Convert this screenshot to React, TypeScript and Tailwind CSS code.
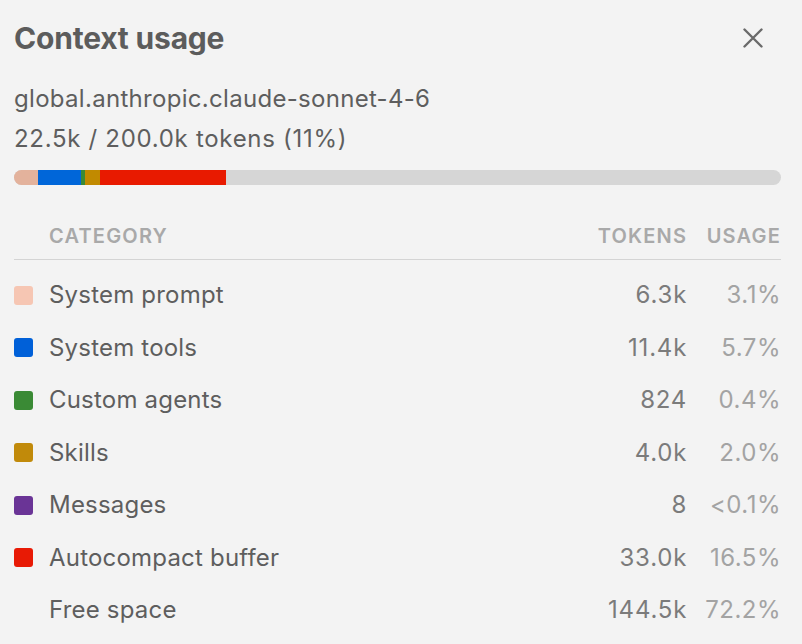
const rows = [
  { name: "System prompt", tokens: "6.3k", usage: "3.1%", pct: 3.1, swatch: "bg-[#f6c6b3]", bar: "bg-[#e3b29c]" },
  { name: "System tools", tokens: "11.4k", usage: "5.7%", pct: 5.7, swatch: "bg-[#0060d8]", bar: "bg-[#0066d9]" },
  { name: "Custom agents", tokens: "824", usage: "0.4%", pct: 0.4, swatch: "bg-[#3a8a35]", bar: "bg-[#3a8a35]" },
  { name: "Skills", tokens: "4.0k", usage: "2.0%", pct: 2.0, swatch: "bg-[#c18a0a]", bar: "bg-[#c18a00]" },
  { name: "Messages", tokens: "8", usage: "<0.1%", pct: 0, swatch: "bg-[#6a3496]", bar: "bg-[#6a3496]" },
  { name: "Autocompact buffer", tokens: "33.0k", usage: "16.5%", pct: 16.5, swatch: "bg-[#e81a05]", bar: "bg-[#e81a00]" },
  { name: "Free space", tokens: "144.5k", usage: "72.2%", pct: 0, swatch: "", bar: "" },
];

export default function App() {
  return (
    <div
      className="w-[802px] h-[644px] bg-[#f3f3f3] pl-[14px] pr-[21px] text-[#5e5e5e] overflow-hidden"
      style={{ fontFamily: "Inter, 'Noto Sans', sans-serif" }}
    >
      <div className="flex items-center justify-between h-[76px]">
        <h1 className="text-[30px] font-bold tracking-[-0.2px] text-[#5c5c5c]">Context usage</h1>
        <button className="mr-[18px] text-[#6a6a6a]" aria-label="Close">
          <svg width="20" height="20" viewBox="0 0 20 20" fill="none" stroke="currentColor" strokeWidth="2.4" strokeLinecap="round">
            <path d="M1.5 1.5L18.5 18.5M18.5 1.5L1.5 18.5" />
          </svg>
        </button>
      </div>

      <div className="mt-[3px] text-[24px] tracking-[0.3px] leading-[40px]">global.anthropic.claude-sonnet-4-6</div>
      <div className="text-[24px] tracking-[0.7px] leading-[40px]">22.5k / 200.0k tokens (11%)</div>

      <div className="mt-[11px] h-[15px] rounded-full bg-[#d6d6d6] flex overflow-hidden">
        {rows
          .filter(r => r.pct > 0)
          .map(r => (
            <div key={r.name} className={`h-full ${r.bar}`} style={{ width: `${r.pct}%` }} />
          ))}
      </div>

      <div className="mt-[31px] grid grid-cols-[1fr_auto_auto] gap-x-[18px] items-center">
        <div className="pl-[35px] text-[20px] font-semibold tracking-[1.2px] text-[#a9a9a9] h-[40px] flex items-center">
          CATEGORY
        </div>
        <div className="text-[20px] font-semibold tracking-[1.2px] text-[#a9a9a9] h-[40px] flex items-center justify-end">
          TOKENS
        </div>
        <div className="text-[20px] font-semibold tracking-[1.2px] text-[#a9a9a9] h-[40px] flex items-center justify-end">
          USAGE
        </div>
        <div className="col-span-3 h-px bg-[#d4d4d4] mt-[3px] mb-[9px]" />
        {rows.map(r => (
          <div key={r.name} className="contents">
            <div className="flex items-center h-[52.5px] text-[24px] tracking-[0.2px]">
              {r.swatch ? (
                <span className={`w-[19px] h-[19px] rounded-[3px] mr-[16px] ${r.swatch}`} />
              ) : (
                <span className="w-[19px] h-[19px] mr-[16px]" />
              )}
              {r.name}
            </div>
            <div className="text-right text-[24px] tracking-[0.8px] text-[#7b7b7b]">{r.tokens}</div>
            <div className="text-right text-[24px] tracking-[0.5px] text-[#a3a3a3]">{r.usage}</div>
          </div>
        ))}
      </div>
    </div>
  );
}
